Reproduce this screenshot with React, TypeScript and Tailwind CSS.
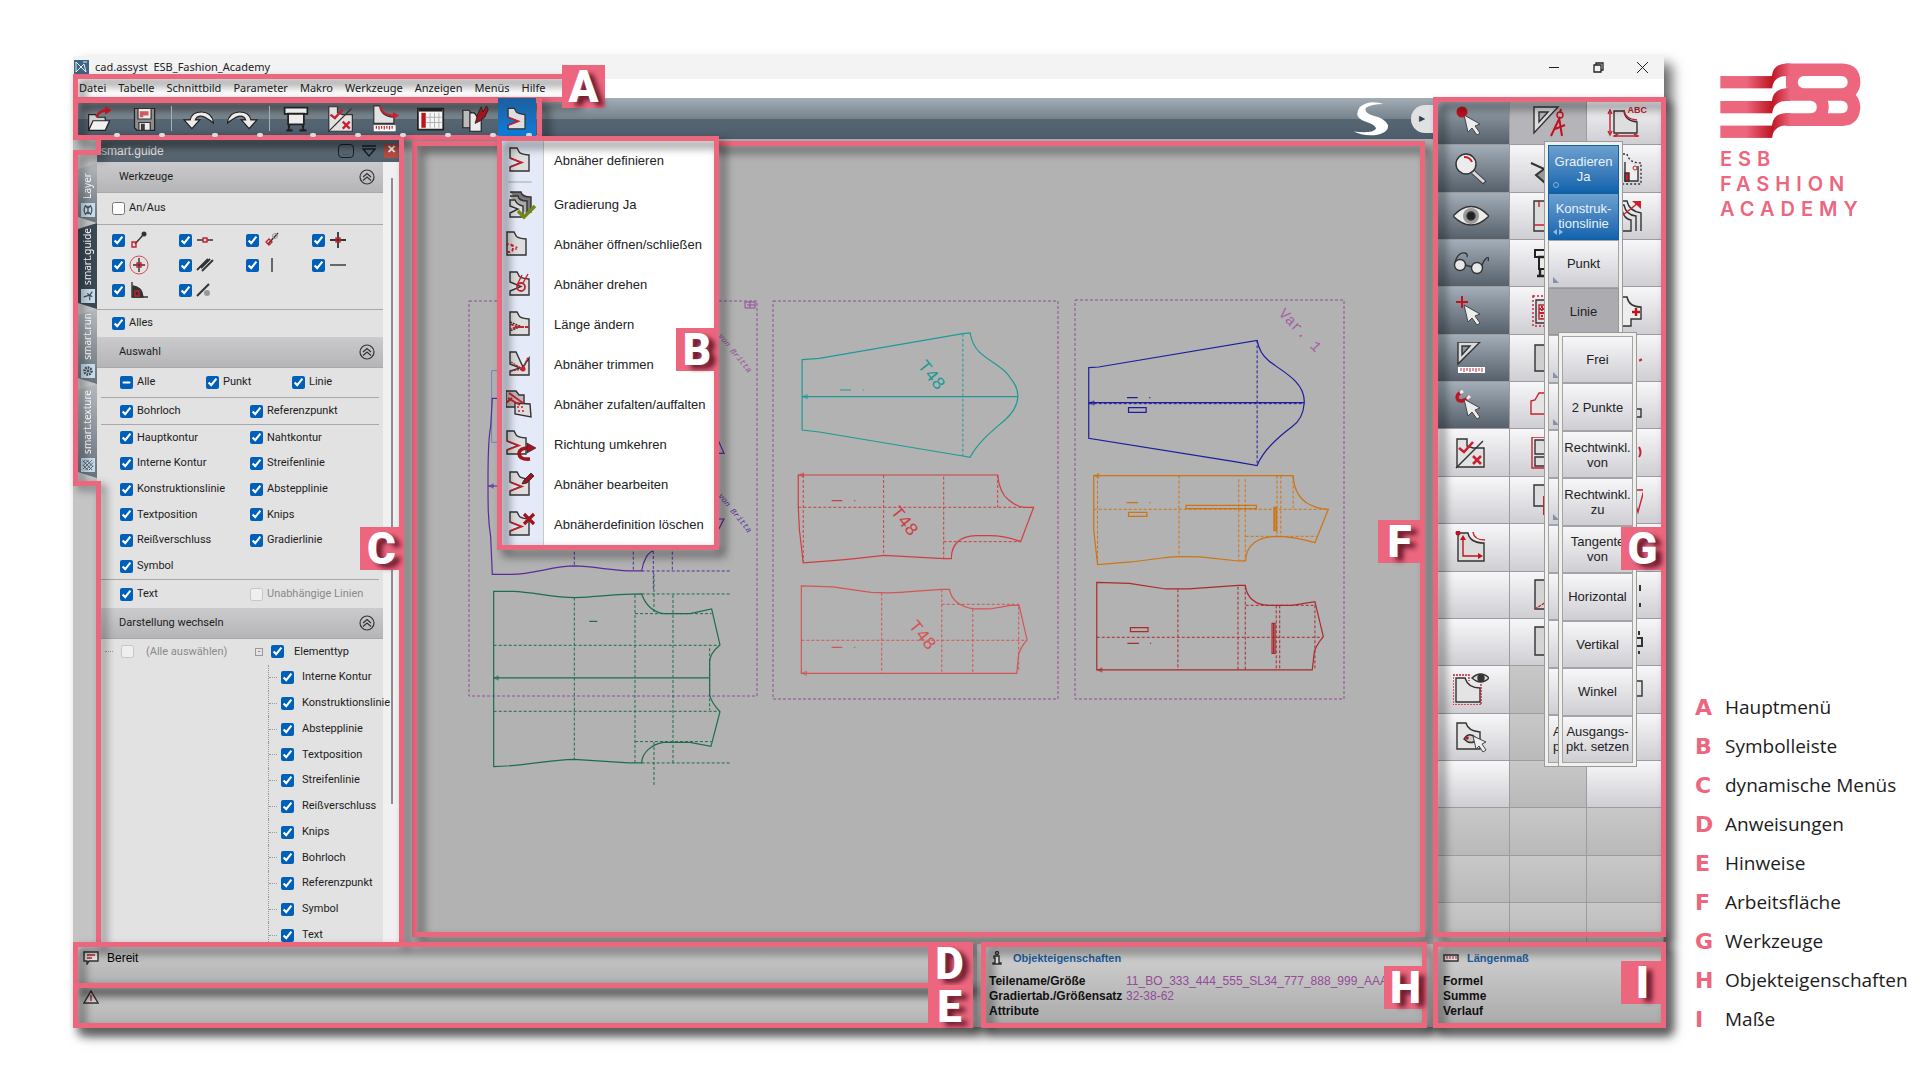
import type { ReactNode } from "react";

const PINK = "#ec667e";

/* ---------- annotation helpers ---------- */

function Frame({ className }: { className: string }) {
  return (
    <div
      className={`absolute z-20 pointer-events-none border-5 border-[#ec667e] drop-shadow-[6px_6px_5px_rgba(0,0,0,0.6)] ${className}`}
    />
  );
}

function Badge({ letter, className }: { letter: string; className: string }) {
  return (
    <div
      className={`absolute z-40 flex size-[43px] items-center justify-center bg-[#ec667e] font-['Roboto',sans-serif] text-[44px] leading-none font-black text-white [text-shadow:6px_4px_5px_rgba(60,0,20,0.75)] ${className}`}
    >
      {letter}
    </div>
  );
}

/* ---------- icons ---------- */

const piecePath = "M4 3H11L13.500 7.500Q16 9.500 23 10V26H4V22L15 17.500L4 13Z";
const solidPiecePath = "M4 3H11L13.500 7.500Q16 9.500 23 10V26H4Z";

function Icon({ children, className = "h-8 w-9", box = "0 0 36 32" }: { children: ReactNode; className?: string; box?: string }) {
  return (
    <svg viewBox={box} className={`shrink-0 ${className}`} fill="none" stroke="#333" strokeWidth="1.4" aria-hidden="true">
      {children}
    </svg>
  );
}

const Dart = () => <path d="M4 13L16 17.500L4 22" stroke="#c8202f" strokeWidth="1.6" />;
const Piece = () => <path d={piecePath} fill="#dedede" />;
const Solid = () => <path d={solidPiecePath} fill="#dedede" />;
const Cursor = () => <path d="M11 10L15 27L19 23L24 30L27 28L22 21L27 19Z" fill="#ececec" stroke="#444" strokeWidth="1" />;
const CheckCross = () => (
  <>
    <path d="M4 2H14V9L20 11H31V30H4Z" fill="#e2e2e2" />
    <path d="M3 31L30 4" />
    <path d="M6 11L11 15L20 5M20 19L28 27M28 19L20 27" stroke="#c8202f" strokeWidth="2.600" />
  </>
);
const Plotter = () => (
  <>
    <path d="M5 3H31V10H27V22H9V10H5Z" fill="#ececec" stroke="#222" strokeWidth="2" />
    <path d="M8 10H28M10 22V28M26 22V28M7 29H14M22 29H30" stroke="#222" strokeWidth="2.400" />
  </>
);

/* ---------- main menu + toolbar ---------- */

const menus = ["Datei", "Tabelle", "Schnittbild", "Parameter", "Makro", "Werkzeuge", "Anzeigen", "Menüs", "Hilfe"];

const toolbar: { label: string; icon?: ReactNode }[] = [
  {
    label: "Öffnen",
    icon: (
      <>
        <path d="M5 11H13L15 14H24V29H5Z" fill="#cfcfcf" stroke="#222" />
        <path d="M5 29L10 18H29L24 29Z" fill="#f2f2f2" stroke="#222" />
        <path d="M14 14Q17 6 26 6" stroke="#c1121f" strokeWidth="2.600" />
        <path d="M24 1L31 6L24 11Z" fill="#c1121f" stroke="none" />
      </>
    ),
  },
  {
    label: "Speichern",
    icon: (
      <>
        <path d="M6 4H29V29H9L6 26Z" fill="#8d8d8d" stroke="#222" />
        <path d="M10 4H25V16H10Z" fill="#ececec" stroke="#333" />
        <path d="M12 7H22V12H16V14H12Z" fill="#d25862" stroke="none" />
        <path d="M11 20H24V29H11Z" fill="#ececec" />
        <path d="M14 22H17V28H14Z" fill="#444" />
      </>
    ),
  },
  { label: "-" },
  { label: "Rückgängig", icon: <path d="M36 21Q34 8 22 8Q11 8 9 17H2L11 27L20 17H15Q17 12 23 13Q29 15 36 21Z" fill="#ececec" stroke="#222" /> },
  { label: "Wiederholen", icon: <path d="M0 21Q2 8 14 8Q25 8 27 17H34L25 27L16 17H21Q19 12 13 13Q7 15 0 21Z" fill="#ececec" stroke="#222" /> },
  { label: "-" },
  { label: "Plotten", icon: <Plotter /> },
  { label: "Prüfen", icon: <CheckCross /> },
  {
    label: "Messen",
    icon: (
      <>
        <path d="M4 1H11Q12 13 27 14V21H4Z" fill="#e2e2e2" />
        <path d="M11 1Q13 12 28 12" stroke="#c8202f" strokeWidth="2" />
        <path d="M26 8L33 12L26 16Z" fill="#c8202f" stroke="none" />
        <path d="M4 23H29V30H4Z" fill="#fff" stroke="none" />
        <path d="M7 24V27M10 24V28M13 24V27M16 24V28M19 24V27M22 24V28M25 24V27" stroke="#c8202f" />
      </>
    ),
  },
  {
    label: "Tabelle",
    icon: (
      <>
        <path d="M3 4H32V28H3Z" fill="#f5f5f5" stroke="#222" strokeWidth="2" />
        <path d="M4 6H31" stroke="#222" strokeWidth="3" />
        <path d="M7 9H12V26H7Z" fill="#c1121f" stroke="none" />
        <path d="M17 9V26M22 9V26M27 9V26M12 14H30M12 20H30" stroke="#aaa" strokeWidth="1" />
      </>
    ),
  },
  {
    label: "Zuschnitt",
    icon: (
      <>
        <path d="M3 6H10L13 10H17V26H3Z" fill="#bbb" stroke="#222" />
        <path d="M11 9H16L19 13H24V30H11Z" fill="#ececec" stroke="#222" />
        <path d="M17 21L20 10L24 2L26 8L30 1L32 5L28 14L23 18Z" fill="#a01420" stroke="#222" strokeWidth="1" />
      </>
    ),
  },
];

const dartMenu: { label: string; icon: ReactNode }[] = [
  { label: "Abnäher definieren", icon: <><Piece /><Dart /></> },
  {
    label: "Gradierung Ja",
    icon: (
      <>
        <path d="M4 3H15Q16 8 25 8V23H22" fill="#777" />
        <path d="M4 7H12Q13 12 21 12V26" fill="#aaa" />
        <path d="M4 11H9Q11 16 17 17V28H4V24L12 20L4 17Z" fill="#dedede" />
        <path d="M12 22L18 28L29 17" stroke="#6f8a14" strokeWidth="3.400" />
      </>
    ),
  },
  { label: "Abnäher öffnen/schließen", icon: <g transform="translate(-3 0)"><Solid /><circle cx="6" cy="19" r="4" stroke="#c8202f" strokeWidth="1.800" strokeDasharray="3 2" /><path d="M9 16L15 19L9 22" stroke="#c8202f" strokeDasharray="2 2" /></g> },
  { label: "Abnäher drehen", icon: <><Piece /><circle cx="15" cy="18" r="4" stroke="#c8202f" strokeWidth="1.800" /><path d="M11 16L16 6M17 14L22 5" stroke="#c8202f" /></> },
  { label: "Länge ändern", icon: <><Solid /><path d="M4 13L15 17.500L4 22" stroke="#333" strokeDasharray="2 1" /><path d="M4 15L12 18L4 20M9 18H24" stroke="#c8202f" strokeDasharray="4 1" strokeWidth="1.800" /></> },
  { label: "Abnäher trimmen", icon: <><path d="M4 3H10L17 18L23 9V26H4V22L14 19L4 15Z" fill="#dedede" /><path d="M5 13L17 20L22 8M5 22L17 20" stroke="#c8202f" strokeDasharray="2 1" /><circle cx="17" cy="20" r="2.500" fill="#c8202f" stroke="none" /></> },
  { label: "Abnäher zufalten/auffalten", icon: <><path d="M0 2H10L13 6H18V18H0Z" fill="#bbb" /><path d="M9 14L24 15L25 28L9 25Z" fill="#dedede" /><path d="M3 4L17 14M2 9L14 16M0 14L6 9" stroke="#c8202f" strokeWidth="2" /><path d="M11 18H19M12 22H18" stroke="#c8202f" strokeDasharray="2 2" /></> },
  { label: "Richtung umkehren", icon: <><g transform="translate(-3 -1)"><Piece /><Dart /></g><path d="M24 30Q13 31 13 24Q14 19 22 19" stroke="#a01420" strokeWidth="3.600" /><path d="M21 14L30 19L21 24Z" fill="#a01420" stroke="#222" strokeWidth=".6" /></> },
  { label: "Abnäher bearbeiten", icon: <><Piece /><Dart /><path d="M16 15L18 11L25 4L28 7L21 14Z" fill="#a01420" stroke="#222" strokeWidth=".8" /></> },
  { label: "Abnäherdefinition löschen", icon: <><Piece /><Dart /><path d="M18 5L28 15M28 5L18 15" stroke="#a01420" strokeWidth="3.200" /></> },
];

function DartMenu() {
  return (
    <div className="absolute top-full left-full z-30 -mt-[3px] -ml-[39px] w-max bg-white">
      <ul className="relative m-[5px] bg-[linear-gradient(to_right,#e4eaf7_41px,#c9c9c9_41px,#c9c9c9_42px,white_42px)]">
        {dartMenu.map((item, index) => (
          <li key={item.label} className={index === 0 ? "mb-0.5" : ""}>
            <button type="button" className="flex h-10 w-full items-center gap-3 pr-2 pl-1 text-left text-[13px] text-[#222]">
              <Icon>{item.icon}</Icon>
              <span>{item.label}</span>
            </button>
            {index === 0 && <div className="ml-1.5 h-0.5 w-6 rounded-full bg-[#c4c8d2]" />}
          </li>
        ))}
      </ul>
      <Frame className="inset-0" />
      <Badge letter="B" className="top-48 right-0" />
    </div>
  );
}

function Toolbar() {
  return (
    <div className="relative flex h-[41px] items-stretch bg-linear-to-b from-[#a3adb5] via-[#76838d] via-50% to-[#5a6b78]">
      <div className="absolute inset-x-0 top-1/2 bottom-0 bg-[#435462]/60" />
      <div className="relative z-30 flex items-stretch pl-1">
        {toolbar.map((tool, index) =>
          tool.label === "-" ? (
            <span key={index} className="flex w-2 justify-center py-2">
              <span className="w-px bg-[#a7b0b8]" />
            </span>
          ) : (
            <button key={index} type="button" aria-label={tool.label} className="relative flex w-[45px] items-center justify-center">
              <Icon className="h-7 w-8">{tool.icon}</Icon>
              <span className="absolute right-0.5 bottom-0.5 h-1 w-1.5 rounded-full bg-[#dcdcdc]" />
            </button>
          ),
        )}
        <div className="relative">
          <button type="button" aria-label="Abnäher" className="relative flex h-full w-[38px] items-center justify-center bg-linear-to-b from-[#1b5f9c] to-[#0a7fe0]">
            <Icon className="h-7 w-8" box="-4 0 36 30"><Piece /><Dart /></Icon>
            <span className="absolute right-1 bottom-0.5 h-1 w-1.5 rounded-full bg-[#dcdcdc]" />
          </button>
          <DartMenu />
        </div>
      </div>
      <Frame className="top-0 -bottom-px left-0 w-[469px]" />
      <div className="relative ml-auto flex items-center gap-[22px]">
        <svg viewBox="76 155 100 100" className="size-9" fill="white" aria-hidden="true">
          <path d="M162 163Q120 150 95 172Q75 200 110 212Q140 222 140 232Q130 246 78 240Q100 252 135 250Q176 244 173 222Q165 203 133 196Q105 188 112 174Q125 163 162 163Z" />
        </svg>
        <button type="button" aria-label="Ausklappen" className="flex h-7 w-[22px] items-center justify-center rounded-l-full bg-[#dfe1e3] text-[8px] text-[#34424e]">
          ▶
        </button>
      </div>
    </div>
  );
}

/* ---------- left panel ---------- */

const sideTabs = [
  { label: "Layer", active: false, className: "h-[60px]" },
  { label: "smart.guide", active: true, className: "h-[86px]" },
  { label: "smart.run", active: false, className: "h-[75px]" },
  { label: "smart.texture", active: false, className: "h-[94px]" },
];

function SideTabs() {
  return (
    <div className="flex w-6 shrink-0 flex-col bg-[#c4c4c4] pt-6 pl-[5px]">
      {sideTabs.map((tab) => (
        <button
          key={tab.label}
          type="button"
          className={`flex w-full flex-col items-center justify-end gap-1 pb-1.5 font-['Noto_Sans',sans-serif] text-[10px] text-white [clip-path:polygon(0_6px,100%_0,100%_100%,0_calc(100%_-_6px))] ${tab.active ? "bg-[#3a4854]" : "bg-linear-to-b from-[#b3b9be] to-[#66727c]"} ${tab.className}`}
        >
          <span className="rotate-180 [writing-mode:vertical-rl]">{tab.label}</span>
          <span className="flex size-3.5 shrink-0 items-center justify-center bg-[#c9dbe9]">
            <svg viewBox="0 0 14 14" className="size-3" fill="none" stroke="#41505d" strokeWidth="1.400">
              {tab.label === "Layer" && <path d="M4 2Q1 7 4 12L7 9L10 12Q13 7 10 2L7 5ZM7 2V12" />}
              {tab.label === "smart.guide" && <path d="M2 8L9 6L12 2M9 6V12M6 4L12 8" />}
              {tab.label === "smart.run" && <><circle cx="7" cy="7" r="4" strokeWidth="3" strokeDasharray="2 1" /><circle cx="7" cy="7" r="1" /></>}
              {tab.label === "smart.texture" && <path d="M1 4L4 1M1 8L8 1M1 12L12 1M4 13L13 4M8 13L13 8M1 2L12 13M5 1L13 9M1 7L7 13" strokeWidth="1" />}
            </svg>
          </span>
        </button>
      ))}
    </div>
  );
}

const guideIcons: ReactNode[] = [
  <><path d="M6 14L14 5" /><circle cx="15" cy="4" r="2.500" fill="#333" stroke="none" /><path d="M3 12H7V17H3Z" stroke="#c8202f" /></>,
  <><path d="M1 10H7M11 10H17" /><path d="M7 8H11V12H7Z" stroke="#c8202f" /></>,
  <><path d="M5 14L15 3" /><path d="M3 12L6 9L9 12L6 15Z" stroke="#c8202f" /><circle cx="12" cy="6" r="2.500" stroke="#999" strokeWidth="1" /></>,
  <><path d="M9 2V18M1 10H17" strokeWidth="1.800" /><path d="M7 8H11V12H7Z" stroke="#c8202f" /></>,
  <><circle cx="10" cy="10" r="9" stroke="#d84a55" strokeWidth="1" /><path d="M10 3V17M4 10H16" /><path d="M8 8H12V12H8Z" stroke="#c8202f" /></>,
  <path d="M1 15L12 4M6 16L17 5M5 13L14 4" strokeWidth="1.800" />,
  <path d="M9 3V17" />,
  <path d="M1 10H17" />,
  <><path d="M3 2V17H19" /><path d="M4 6Q13 7 14 17H4Z" fill="#333" /><path d="M6 11H10V16H6Z" stroke="#c8202f" /></>,
  <><path d="M1 16L13 4" strokeWidth="2" /><circle cx="11" cy="13" r="3" fill="#999" stroke="none" /></>,
];

function Check({ label, mixed, ...rest }: { label?: string; mixed?: boolean; defaultChecked?: boolean; disabled?: boolean; "aria-label"?: string }) {
  return (
    <label className={`flex items-center gap-1 whitespace-nowrap ${rest.disabled ? "text-[#8a8a8a]" : ""}`}>
      <input
        type="checkbox"
        ref={(el) => {
          if (el && mixed) el.indeterminate = true;
        }}
        className="size-[13px] shrink-0 accent-[#005fb8]"
        {...rest}
      />
      {label}
    </label>
  );
}

function SectionHeader({ title }: { title: string }) {
  return (
    <div className="flex h-[31px] shrink-0 items-center justify-between border-b border-[#a8a8aa] bg-linear-to-b from-[#cbcbcd] to-[#b5b5b7] pr-2 pl-[22px]">
      <h2>{title}</h2>
      <button type="button" aria-label={`${title} einklappen`}>
        <svg viewBox="0 0 16 16" className="size-4" fill="none" stroke="#333" strokeWidth="1.200">
          <circle cx="8" cy="8" r="7" />
          <path d="M4 8L8 4.500L12 8M4 11.500L8 8L12 11.500" />
        </svg>
      </button>
    </div>
  );
}

const contours = [
  ["Hauptkontur", "Nahtkontur"],
  ["Interne Kontur", "Streifenlinie"],
  ["Konstruktionslinie", "Abstepplinie"],
  ["Textposition", "Knips"],
  ["Reißverschluss", "Gradierlinie"],
  ["Symbol", ""],
];

const elementTypes = [
  "Interne Kontur",
  "Konstruktionslinie",
  "Abstepplinie",
  "Textposition",
  "Streifenlinie",
  "Reißverschluss",
  "Knips",
  "Bohrloch",
  "Referenzpunkt",
  "Symbol",
  "Text",
];

function GuidePanel() {
  return (
    <aside className="relative flex w-[307px] shrink-0 flex-col overflow-hidden pr-1 font-['Roboto',sans-serif] text-[11px] text-[#1c1c1c]">
      <div className="flex h-[23px] items-center gap-2 bg-linear-to-b from-[#66717a] to-[#51616d] pr-0.5 pl-1 text-[#e6e6e6]">
        <span className="mr-auto font-['Liberation_Sans',sans-serif] text-xs">smart.guide</span>
        <button type="button" aria-label="Optionen" className="flex h-3.5 w-4 items-end justify-center rounded-sm border border-[#16202a] text-[8px] leading-[8px] text-[#16202a]">
          ...
        </button>
        <svg viewBox="0 0 14 12" className="h-3 w-3.5" fill="none" stroke="#16202a" strokeWidth="1.500">
          <path d="M0 1H14M1 4H13L7 11Z" />
        </svg>
        <button type="button" aria-label="Schließen" className="flex size-3.5 items-center justify-center bg-[#b34c42] text-[11px] font-bold text-white">
          ✕
        </button>
      </div>
      <div className="flex min-h-0 flex-1 bg-[#f0f0f0]">
        <div className="flex w-[286px] flex-col bg-[#e2e2e2]">
          <SectionHeader title="Werkzeuge" />
          <div className="flex h-8 items-center border-b border-[#a8a8a8] pl-[15px]">
            <Check label="An/Aus" />
          </div>
          <div className="grid h-[85px] grid-cols-4 content-center gap-y-[5px] border-b border-[#a8a8a8] pr-1 pb-1 pl-[15px]">
            {guideIcons.map((icon, index) => (
              <div key={index} className="flex items-center gap-1">
                <Check defaultChecked aria-label={`Fang ${index + 1}`} />
                <Icon className="size-5" box="0 0 20 20">{icon}</Icon>
              </div>
            ))}
          </div>
          <div className="flex h-[27px] items-center pl-[15px]">
            <Check label="Alles" defaultChecked />
          </div>
          <SectionHeader title="Auswahl" />
          <div className="mx-1 grid h-[30px] grid-cols-[86px_86px_1fr] items-center border-b border-[#a8a8a8] pl-[19px]">
            <Check label="Alle" mixed />
            <Check label="Punkt" defaultChecked />
            <Check label="Linie" defaultChecked />
          </div>
          <div className="mx-1 grid h-[27px] grid-cols-[130px_1fr] items-center border-b border-[#a8a8a8] pl-[19px]">
            <Check label="Bohrloch" defaultChecked />
            <Check label="Referenzpunkt" defaultChecked />
          </div>
          <div className="mx-1 grid h-[155px] auto-rows-fr grid-cols-[130px_1fr] items-center border-b border-[#a8a8a8] pl-[19px]">
            {contours.flat().map((name, index) => (name ? <Check key={index} label={name} defaultChecked /> : <span key={index} />))}
          </div>
          <div className="mx-1 grid h-7 grid-cols-[130px_1fr] items-center pl-[19px]">
            <Check label="Text" defaultChecked />
            <Check label="Unabhängige Linien" disabled />
          </div>
          <SectionHeader title="Darstellung wechseln" />
          <div className="-mb-1 grid min-h-0 flex-1 auto-rows-fr">
            <div className="flex items-center pl-2">
              <span className="mr-2 w-2 border-t border-dotted border-[#999]" />
              <label className="flex items-center gap-3 whitespace-nowrap text-[#8a8a8a]">
                <input type="checkbox" disabled className="size-[13px]" />
                (Alle auswählen)
              </label>
              <span className="mr-2 ml-auto flex size-2 items-center justify-center border border-[#999] text-[8px] leading-none text-[#334]">-</span>
              <label className="flex w-[119px] shrink-0 items-center gap-2.5">
                <input type="checkbox" defaultChecked className="size-[13px] accent-[#005fb8]" />
                Elementtyp
              </label>
            </div>
            {elementTypes.map((name) => (
              <div key={name} className="ml-[171px] flex items-center border-l border-dotted border-[#999]">
                <span className="mr-1 w-2 border-t border-dotted border-[#999]" />
                <label className="flex items-center gap-2 whitespace-nowrap">
                  <input type="checkbox" defaultChecked className="size-[13px] accent-[#005fb8]" />
                  {name}
                </label>
              </div>
            ))}
          </div>
        </div>
        <div className="ml-2 mt-4 mb-[140px] w-0.5 bg-[#8c8c8c]" />
      </div>
    </aside>
  );
}

/* ---------- drawing area ---------- */

function Arrow({ x, y, color }: { x: number; y: number; color: string }) {
  return <path d={`M${x} ${y}l14 -7v14z`} stroke={color} fill={color} fillOpacity=".5" />;
}

function Shape({ color, outline, dashed, arrow }: { color: string; outline: string; dashed: string; arrow: [number, number] }) {
  return (
    <g stroke={color} fill="none">
      <path d={outline} vectorEffect="non-scaling-stroke" strokeWidth="1.200" />
      <path d={dashed} vectorEffect="non-scaling-stroke" strokeDasharray="3 2" />
      <Arrow x={arrow[0]} y={arrow[1]} color={color} />
    </g>
  );
}

function Drawing() {
  return (
    <svg viewBox="404 139 1029 805" preserveAspectRatio="xMinYMin meet" className="block h-[805px] w-full" fill="none">
      <g stroke="#954a9a" strokeDasharray="3 2">
        <path d="M469 301H757V696H469Z" />
        <path d="M773 301H1058V699H773Z" />
        <path d="M1075 300H1344V699H1075Z" />
      </g>
      <path d="M745 302H755V308H745ZM747 305H755M750 302V308" stroke="#954a9a" />

      <g transform="translate(460 280) scale(.3333)">
        <path d="M120 272H95V487H120" stroke="#6f84b4" vectorEffect="non-scaling-stroke" />
        <Shape
          color="#5b2a9a"
          outline="M120 355H97L92 440C84 480 84 540 84 600C84 680 84 720 92 770L97 883H155C220 883 280 858 343 858C400 860 450 870 505 873H545C550 840 565 815 580 813M84 618H120M770 470L792 520H770M770 760L792 717H770"
          dashed="M343 800V858M520 800V873M580 813V930M637 800V873M545 873H810"
          arrow={[86, 618]}
        />
        <Shape
          color="#1c6e4a"
          outline="M101 934H160C220 936 280 953 345 953C420 950 470 942 545 942C555 970 575 995 610 1001H690L755 987L780 1095Q750 1120 749 1145V1245Q755 1270 780 1295L753 1399L690 1387H610C575 1392 545 1420 545 1449H505L343 1438C260 1440 200 1458 101 1460ZM101 1194H749M388 1024H412"
          dashed="M545 942H810M525 1001H755M101 1096H780M101 1294H780M525 1385H755M545 1449H810M343 953V1438M525 945V1449M639 945V1449M582 882V1001M582 1386V1515M749 1105V1290"
          arrow={[101, 1194]}
        />
      </g>

      <g transform="translate(760 290) scale(.3827 .3333)">
        <Shape
          color="#1d9a96"
          outline="M110 209L155 205L530 131L549 129Q555 165 572 185C600 215 625 225 645 250C665 280 673 290 674 320C672 350 660 370 640 390C610 420 570 455 549 502L530 498L155 426L110 420ZM110 320H674M209 300H238M268 300H271"
          dashed="M530 131V498"
          arrow={[110, 320]}
        />
        <Shape
          color="#1c1c9c"
          outline="M859 233L885 231L1299 151Q1305 190 1330 213C1355 235 1385 255 1400 275C1420 300 1423 325 1422 340C1420 370 1410 395 1390 410C1355 440 1315 480 1299 527L1240 515L859 445ZM859 338H1422M959 323H987M1017 323H1020M963 353H1009V367H963Z"
          dashed="M1299 151V527M859 341H1422"
          arrow={[859, 339]}
        />
        <Shape
          color="#cf3f42"
          outline="M100 555H621C624 590 632 615 650 630Q670 650 690 652H715L681 755Q640 737 600 737H565Q500 740 500 806H480L325 796Q250 806 190 812L113 819L103 720L100 650ZM187 632H215M246 632H249"
          dashed="M113 555V815M323 555V796M480 560V806M621 555V652M100 652H690M480 755H681"
          arrow={[100, 555]}
        />
        <Shape
          color="#d25657"
          outline="M108 888L190 891L290 907Q350 911 400 904L475 898H495C500 930 520 950 560 957H600L655 946H677L698 1050Q678 1075 675 1100L671 1150H108ZM187 1072H215M246 1072H249"
          dashed="M318 908V1150M475 898V1145M556 957V1150M676 950V1140M108 1051H698M475 943H677"
          arrow={[108, 1150]}
        />
        <Shape
          color="#cf7414"
          outline="M872 557H1393C1395 600 1410 625 1430 640Q1455 657 1485 658L1450 758Q1400 740 1350 739C1300 740 1270 765 1269 813H1250L1150 801Q1090 798 1050 804L970 816L882 824L872 720ZM1113 646H1297V656H1113ZM963 667H1011V679H963ZM958 638H988M1017 638H1020M1343 652H1350V722H1343ZM1346 652V722"
          dashed="M882 557V820M1095 557V800M1251 568V813M1268 568V813M1351 557V739M1361 557V739M1393 557V655M872 658H1485M1269 739H1455"
          arrow={[872, 557]}
        />
        <Shape
          color="#ab2a2c"
          outline="M880 877L965 880L1060 897H1120L1250 886H1268C1272 920 1290 944 1330 946H1390L1450 935L1472 1040Q1450 1070 1448 1090L1443 1140H880ZM968 1013H1014V1025H968ZM960 1060H990M1019 1060H1022M1338 1000H1346V1090H1338ZM1342 1000V1090"
          dashed="M1092 898V1140M1249 890V1140M1268 890V1140M1349 946V1140M1358 946V1140M1450 946V1140M880 1042H1470M1269 946H1450"
          arrow={[880, 1140]}
        />
      </g>

      <g className="font-['Liberation_Mono',monospace] text-lg">
        <text transform="translate(917 366) rotate(51)" fill="#1d9a96">T48</text>
        <text transform="translate(890 512) rotate(51)" fill="#cf3f42">T48</text>
        <text transform="translate(908 626) rotate(51)" fill="#d25657">T48</text>
      </g>
      <text transform="translate(1278 314) rotate(46)" fill="#a45fa8" className="font-['Liberation_Mono',monospace] text-[15px]">Var. 1</text>
      <g className="font-['Liberation_Mono',monospace] text-[8px] italic">
        <text transform="translate(718 336) rotate(51)" fill="#954a9a">von Britta</text>
        <text transform="translate(718 496) rotate(51)" fill="#5b2a9a">von Britta</text>
      </g>
    </svg>
  );
}

/* ---------- tool palette ---------- */

const setSquare = "M4 2H28L4 28ZM9 7V17L18 7Z";

const leftTools: ReactNode[] = [
  <><circle cx="9" cy="7" r="5.500" fill="#c1121f" stroke="none" /><Cursor /></>,
  <><path d="M20 19L32 30" stroke="#444" strokeWidth="5" /><path d="M20 19L31 29" stroke="#ddd" strokeWidth="3" /><circle cx="13" cy="11" r="10" fill="#ececec" /><path d="M11 4Q17 4 19 9" stroke="#c8202f" strokeWidth="2" /></>,
  <><path d="M0 16Q18 -3 36 16Q18 34 0 16Z" fill="#ececec" /><circle cx="18" cy="16" r="8" fill="#9a9a9a" stroke="none" /><circle cx="18" cy="16" r="4" fill="#222" /></>,
  <><circle cx="7" cy="18" r="5.500" fill="#e8e8e8" /><circle cx="24" cy="21" r="5.500" fill="#e8e8e8" /><path d="M12 18L19 20M2 15Q5 5 12 6Q15 7 14 10M29 18Q33 9 36 11L35 14" /></>,
  <><path d="M9 1V13M3 7H15" stroke="#c1121f" strokeWidth="2" /><Cursor /></>,
  <><path d="M5 0H27L5 22ZM9 4V13L17 4Z" fill="#dcdcdc" fillRule="evenodd" /><path d="M5 25H32V31H5Z" fill="#fff" stroke="none" /><path d="M8 26V29M11 26V30M14 26V29M17 26V30M20 26V29M23 26V30M26 26V29M29 26V30" stroke="#c8202f" strokeWidth="1" /></>,
  <><path d="M8 3Q2 7 5 11Q10 14 16 8" stroke="#c1121f" strokeWidth="3.500" /><path d="M7 4L10 2M14 10L17 7" stroke="#eee" strokeWidth="3" /><Cursor /></>,
  <CheckCross />,
  null,
  <><path d="M5 2H15Q17 12 31 12V30H5Z" fill="#dcdcdc" /><path d="M20 1Q21 9 32 9" stroke="#c8202f" /><circle cx="5" cy="2" r="2.500" fill="#c1121f" stroke="none" /><path d="M10 6V25H28" stroke="#c1121f" /><path d="M7 9L10 4L13 9ZM25 22L30 25L25 28Z" fill="#c1121f" stroke="none" /></>,
  null,
  null,
  <><path d="M3 5H12Q15 15 27 15V29H3Z" fill="#e4e4e4" /><path d="M0 2H16V8M28 11V32H0V2" stroke="#c8202f" strokeDasharray="2 1" /><path d="M19 5Q28 -3 36 5Q28 13 19 5Z" fill="#ddd" /><circle cx="28" cy="5" r="3" fill="#333" /></>,
  <><path d="M4 2H13Q15 10 27 11V28H4Z" fill="#e4e4e4" /><path d="M11 18Q16 10 23 17Q22 23 15 21Z" fill="#ccc" /><circle cx="14" cy="17" r="1.800" fill="#c1121f" stroke="none" /><path d="M20 15L23 28L26 25L30 31L33 29L29 23L33 21Z" fill="#eee" stroke="#444" strokeWidth="1" /></>,
];

const middleTools: ReactNode[] = [
  <><path d={setSquare} fill="#dcdcdc" fillRule="evenodd" /><path d="M30 12L21 31M29 12L32 31M25 24L35 20M31 4L30 8" stroke="#c1121f" strokeWidth="2" /><circle cx="30" cy="10" r="3" stroke="#c1121f" /></>,
  <path d="M1 10L14 16L20 6L22 20L14 29L6 22L14 16" fill="#999" strokeWidth="2" />,
  <><path d="M4 1H28V31H4Z" fill="#dcdcdc" /><path d="M9 1V7M4 25H18" stroke="#c8202f" /></>,
  <Plotter />,
  <><path d="M3 1H30V31H3Z" stroke="#c8202f" strokeDasharray="2 2" /><path d="M6 5H28V28H6Z" fill="#ddd" /><path d="M9 10H24V24H9Z" stroke="#c8202f" /><path d="M12 11V24M9 14H24M9 18H24" stroke="#c8202f" strokeDasharray="2 1" strokeWidth="2" /></>,
  <path d="M5 3H28V29H5Z" fill="#cfcfcf" />,
  <path d="M1 12L5 11L9 4H18V25H1Z" fill="#e4e4e4" stroke="#c8202f" />,
  <><path d="M2 0H28V31H2Z" stroke="#c8202f" /><path d="M5 3H14L18 12V17H5ZM5 20H14L18 24V29H5Z" fill="#ddd" /></>,
  <><path d="M4 1H14L18 8V22H4Z" fill="#ddd" /><path d="M14 12V31" stroke="#c8202f" strokeWidth="2" /></>,
  null,
  <><path d="M5 1H28V30H5Z" fill="#d4d4d4" /><path d="M5 30L24 18" stroke="#c8202f" strokeDasharray="3 1" /></>,
  <path d="M5 1H28V29H5Z" fill="#d4d4d4" />,
];

const rightTools: ReactNode[] = [
  <><path d="M7 6H17Q18 16 30 17V28H7Z" fill="#dedede" /><path d="M17 5Q18 14 30 15" stroke="#c8202f" /><path d="M3 7V28M8 31H30" stroke="#c8202f" /><path d="M1 9L3 5L5 9M1 26L3 30L5 26M11 29L7 31L11 33M27 29L31 31L27 33" stroke="#c8202f" /></>,
  <><path d="M4 1H20Q22 10 34 10V31H4" strokeDasharray="2 2" /><path d="M18 9V28H31V13" fill="#eee" /><path d="M18 20V28H22V20Z" fill="#c8202f" /><circle cx="28" cy="15" r="2" stroke="#c8202f" strokeWidth="1" /></>,
  <><path d="M12 1H20Q22 11 34 13V31M12 5H17Q19 15 29 16V31M12 10H15Q17 19 24 20V31H12" /><path d="M16 15L31 3" stroke="#c8202f" /><path d="M25 1H34V9Z" fill="#c8202f" stroke="none" /></>,
  null,
  <><path d="M16 2H20Q22 12 34 12V24H24V31H16" fill="#eee" /><path d="M29 13V21M25 17H33" stroke="#c1121f" strokeWidth="2.400" /></>,
  <path d="M33 17L34 19" stroke="#c8202f" strokeWidth="3" />,
  <path d="M28 20H34V28H28" />,
  <path d="M32 10Q35 16 32 20" stroke="#c8202f" strokeWidth="2" />,
  <path d="M24 6H37L31 28Z" stroke="#c8202f" />,
  null,
  <path d="M33 6V12M33 24V28" strokeWidth="2" />,
  <path d="M29 12H35V20H29M32 5V9M32 25V28" strokeWidth="2" />,
  <path d="M28 8H35V23H28" />,
];

function toolTone(row: number, col: number) {
  if (row >= 15 || (col === 1 && row >= 12)) return "bg-linear-to-b from-[#c8c8c8] to-[#b9b9ba]";
  if (col === 0 && row < 7) return "bg-linear-to-b from-[#a3aeb8] to-[#56616c]";
  if (col === 1 && row === 0) return "bg-[#b5b4b9]";
  return "bg-linear-to-b from-[#f7f7f9] to-[#cfced3]";
}

const lineModes = ["Frei", "2 Punkte", "Rechtwinkl. von", "Rechtwinkl. zu", "Tangente von", "Horizontal", "Vertikal", "Winkel", "Ausgangs-\npkt. setzen"];

const flyout = "absolute grid auto-rows-fr border border-[#9a9a9a] bg-[#f0f0ec] p-[3px] text-[13px] leading-[15px] text-[#222]";
const flyButton = "relative border border-[#a4a4a6] bg-linear-to-b from-[#f7f7f9] to-[#cfced3] text-center whitespace-pre-line";

function ToolPalette() {
  return (
    <section className="relative w-[231px] shrink-0" aria-label="Werkzeuge">
      <div className="grid h-full grid-cols-3 grid-rows-[repeat(17,minmax(0,1fr))_41px]">
        {Array.from({ length: 54 }, (_, index) => {
          const row = Math.floor(index / 3);
          const col = index % 3;
          const icon = [leftTools, middleTools, rightTools][col][row];
          return (
            <button
              key={index}
              type="button"
              aria-label={`Werkzeug ${index + 1}`}
              className={`relative flex items-center justify-center border-r border-b border-[#9c9c9e] ${toolTone(row, col)}`}
            >
              {icon && <Icon>{icon}</Icon>}
              {index === 2 && <span className="absolute top-2 right-4 text-[9px] leading-none font-bold text-[#c8202f]">ABC</span>}
            </button>
          );
        })}
      </div>

      <div className={`${flyout} top-[43px] left-[111px] z-10 h-[626px] w-[79px] grid-rows-13`}>
        <button type="button" className="relative border border-[#12609f] bg-linear-to-b from-[#6ba0cf] to-[#0f63ad] text-[#e9f2fa]">
          Gradieren<br />Ja
          <span className="absolute bottom-1 left-1 size-1.5 rounded-full border border-[#7fb2e0]" />
        </button>
        <button type="button" className="relative border border-[#12609f] bg-linear-to-b from-[#6ba0cf] to-[#0f63ad] text-[#e9f2fa]">
          Konstruk-<br />tionslinie
          <svg viewBox="0 0 10 6" className="absolute bottom-1 left-1 h-1.5 w-2.5" fill="#8cbbe6">
            <path d="M4 0V6L0 3ZM6 0V6L10 3Z" />
          </svg>
        </button>
        <button type="button" className={flyButton}>
          Punkt
          <span className="absolute bottom-1 left-1 border-3 border-t-transparent border-r-transparent border-b-[#8792a4] border-l-[#8792a4]" />
        </button>
        <button type="button" className="relative border border-[#98989a] bg-[#acabaf]">Linie</button>
        {["", "", "", "", "", "", "", "", "A\np"].map((text, index) => (
          <button key={index} type="button" aria-label={`Option ${index + 1}`} className={`${flyButton} pl-1 text-left`}>
            {text}
            {[0, 1, 3].includes(index) && (
              <span className="absolute bottom-1 left-1 border-3 border-t-transparent border-r-transparent border-b-[#8792a4] border-l-[#8792a4]" />
            )}
          </button>
        ))}
      </div>
      <div className={`${flyout} top-[234px] left-[125px] z-10 h-[435px] w-[79px]`}>
        {lineModes.map((mode) => (
          <button key={mode} type="button" className={flyButton}>
            {mode}
          </button>
        ))}
      </div>

      <Frame className="-top-px bottom-[7px] left-0 -right-0.5" />
      <Badge letter="G" className="top-[429px] right-0" />
    </section>
  );
}

/* ---------- status area ---------- */

function StatusArea() {
  return (
    <footer className="flex h-[83px] text-xs">
      <div className="flex flex-1 flex-col bg-[#a4a4a4] pr-1">
        <div className="relative h-10 bg-linear-to-b from-[#cdcdcd] to-[#b2b2b2] pt-1.5 pl-2.5">
          <div className="flex items-center gap-2 leading-4">
            <Icon className="h-3.5 w-4" box="0 0 16 14">
              <path d="M1 1H15V10H6L4 13V10H1Z" fill="#eee" />
              <path d="M4 4H12M4 7H9" stroke="#c8202f" />
            </Icon>
            Bereit
          </div>
          <Frame className="-top-0.5 -bottom-1 left-0 right-0" />
          <Badge letter="D" className="-top-0.5 right-0.5" />
        </div>
        <div className="relative flex-1 bg-linear-to-b from-[#cdcdcd] to-[#b2b2b2] pt-1.5 pl-2.5">
          <Icon className="h-3.5 w-4" box="0 0 16 14">
            <path d="M8 1L15 13H1Z" fill="#ddd" />
            <path d="M8 5V11" stroke="#c8202f" />
          </Icon>
          <Frame className="-top-px -bottom-px left-0 right-0" />
          <Badge letter="E" className="-bottom-px right-0.5" />
        </div>
      </div>
      <section className="relative w-[456px] bg-linear-to-b from-[#d4d4d4] to-[#a9a9a9] pt-1.5 pl-3">
        <h2 className="flex items-center gap-2 text-[11px] leading-4 font-bold text-[#1c5c9c]">
          <Icon className="h-3.5 w-4" box="0 0 16 14">
            <circle cx="8" cy="2" r="1.500" fill="#eee" />
            <path d="M5 5H10V12H12V13H4V12H6V7H5Z" fill="#eee" />
          </Icon>
          Objekteigenschaften
        </h2>
        <dl className="mt-2 grid grid-cols-[137px_1fr] text-xs leading-[15px]">
          <dt className="font-bold text-[#111]">Teilename/Größe</dt>
          <dd className="whitespace-nowrap text-[#954a9a]">11_BO_333_444_555_SL34_777_888_999_AAA_</dd>
          <dt className="font-bold text-[#111]">Gradiertab./Größensatz</dt>
          <dd className="text-[#954a9a]">32-38-62</dd>
          <dt className="font-bold text-[#111]">Attribute</dt>
        </dl>
        <Frame className="-top-0.5 -bottom-px left-1 right-1.5" />
        <Badge letter="H" className="top-[22px] right-1.5" />
      </section>
      <section className="relative w-[231px] bg-linear-to-b from-[#d4d4d4] to-[#a9a9a9] pt-1.5 pl-2.5">
        <h2 className="flex items-center gap-2 text-[11px] leading-4 font-bold text-[#1c5c9c]">
          <Icon className="h-3.5 w-4" box="0 0 16 14">
            <path d="M1 4H15V10H1Z" fill="#eee" />
            <path d="M4 5V8M7 5V8M10 5V8M13 5V8" stroke="#c8202f" strokeWidth="1" />
          </Icon>
          Längenmaß
        </h2>
        <ul className="mt-2 leading-[15px] font-bold text-[#111]">
          <li>Formel</li>
          <li>Summe</li>
          <li>Verlauf</li>
        </ul>
        <Frame className="-top-0.5 -bottom-px left-0 -right-0.5" />
        <Badge letter="I" className="top-[17px] right-0" />
      </section>
    </footer>
  );
}

/* ---------- branding + legend ---------- */

function Logo() {
  return (
    <div className="ml-14 text-[#ec667e]">
      <svg viewBox="60 38 424 228" className="h-[76px] w-[141px]" aria-hidden="true">
        <defs>
          <linearGradient id="bar" x1="0" x2="1">
            <stop offset=".5" stopColor={PINK} />
            <stop offset="1" stopColor="#be1622" />
          </linearGradient>
          <linearGradient id="fold" x1="0" x2="1">
            <stop offset="0" stopColor="#be1622" />
            <stop offset="1" stopColor={PINK} />
          </linearGradient>
        </defs>
        <path d="M258 39H428Q482 42 482 95Q482 118 468 133Q482 150 482 172Q478 225 428 227H258Z" fill={PINK} />
        <g fill="white">
          <rect x="294" y="77" width="150" height="37" rx="18" />
          <path d="M258 77Q254 95 260 114H250V77Z" />
          <path d="M240 151H333Q351 153 351 170Q351 187 333 189H240Z" />
          <path d="M384 151H426Q444 153 444 170Q444 187 426 189H384Q390 170 384 151Z" />
        </g>
        {[77, 152, 226].map((y) => (
          <g key={y}>
            <rect x="61" y={y} width="156" height="37" fill="url(#bar)" />
            <path d={`M216 ${y + 37}V${y}Q220 ${y - 36} 258 ${y - 38}H272V${y}H258Q222 ${y} 216 ${y + 37}Z`} fill="url(#fold)" />
          </g>
        ))}
      </svg>
      <p className="mt-2 font-['Inter',sans-serif] text-xl leading-[25px] font-semibold tracking-[0.3em]">
        ESB
        <br />
        FASHION
        <br />
        ACADEMY
      </p>
    </div>
  );
}

const legend = [
  ["A", "Hauptmenü"],
  ["B", "Symbolleiste"],
  ["C", "dynamische Menüs"],
  ["D", "Anweisungen"],
  ["E", "Hinweise"],
  ["F", "Arbeitsfläche"],
  ["G", "Werkzeuge"],
  ["H", "Objekteigenschaften"],
  ["I", "Maße"],
];

export default function App() {
  return (
    <main className="flex min-h-screen bg-white pt-14 pb-[54px] pl-[73px] font-['Liberation_Sans',sans-serif]">
      <div className="flex min-w-0 flex-1 flex-col shadow-[8px_8px_12px_rgba(0,0,0,0.6)]">
        <header className="flex h-[23px] items-center gap-1.5 bg-[#f3f3f3] pl-px font-['Noto_Sans',sans-serif] text-[11px] text-[#222]">
          <svg viewBox="0 0 15 15" className="size-[15px]" fill="none" stroke="#e8eef3">
            <path d="M0 0H15V15H0Z" fill="#3c6484" stroke="none" />
            <path d="M2 2V12L10 4L12 12M2 2L12 12M9 2H13" />
          </svg>
          <h1 className="whitespace-pre">cad.assyst  ESB_Fashion_Academy</h1>
          <div className="mr-4 ml-auto flex items-center gap-[33px]">
            <button type="button" aria-label="Minimieren">
              <svg viewBox="0 0 11 11" className="size-[11px]" stroke="#222"><path d="M0 5.500H10" /></svg>
            </button>
            <button type="button" aria-label="Wiederherstellen">
              <svg viewBox="0 0 11 11" className="size-[11px]" fill="none" stroke="#222" strokeWidth="1.300"><path d="M1 3H8V10H1ZM3 3V1H10V8H8" /></svg>
            </button>
            <button type="button" aria-label="Beenden">
              <svg viewBox="0 0 11 11" className="size-[11px]" stroke="#222"><path d="M0 0L11 11M11 0L0 11" /></svg>
            </button>
          </div>
        </header>

        <nav className="relative flex h-[19px] items-center bg-white pl-1.5 font-['Noto_Sans',sans-serif] text-[11px] text-[#222]">
          <div className="flex gap-3">
            {menus.map((menu) => (
              <button key={menu} type="button">
                {menu}
              </button>
            ))}
          </div>
          <Frame className="-top-[5px] -bottom-1 left-0 w-[500px]" />
          <Badge letter="A" className="-top-3.5 left-[489px]" />
        </nav>

        <div className="flex min-h-[845px] flex-1">
          <div className="flex min-w-0 flex-1 flex-col">
            <Toolbar />
            <div className="relative flex min-h-0 flex-1">
              <SideTabs />
              <GuidePanel />
              <section className="relative min-w-0 flex-1 bg-[#b2b2b2]" aria-label="Arbeitsfläche">
                <Drawing />
                <Frame className="top-0.5 right-2 bottom-[7px] left-2" />
                <Badge letter="F" className="top-[381px] right-3" />
              </section>
              <svg viewBox="0 0 331 810" className="pointer-events-none absolute -top-1 left-0 z-20 h-[810px] w-[331px] drop-shadow-[5px_4px_4px_rgba(0,0,0,0.45)]" fill="none" stroke={PINK} strokeWidth="5">
                <path d="M331 2.500H25.500V17.500H2.500V348.500H25.500V810M328.500 0V810" />
              </svg>
              <Badge letter="C" className="top-[388px] left-[287px]" />
            </div>
          </div>
          <ToolPalette />
        </div>

        <StatusArea />
      </div>

      <aside className="flex w-64 shrink-0 flex-col pt-[7px] text-[#1c1c1c]">
        <Logo />
        <ul className="mt-auto -mb-3 ml-[31px] flex flex-col">
          {legend.map(([letter, name]) => (
            <li key={letter} className="flex h-[39px] items-center">
              <span className="w-[30px] font-['DejaVu_Sans',sans-serif] text-[22px] font-bold text-[#ec667e]">{letter}</span>
              <span className="font-['Open_Sans',sans-serif] text-[19px] whitespace-nowrap">{name}</span>
            </li>
          ))}
        </ul>
      </aside>
    </main>
  );
}
